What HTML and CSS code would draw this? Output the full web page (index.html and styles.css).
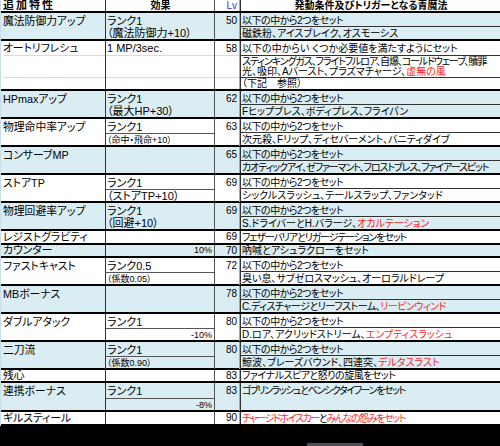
FILE: index.html
```html
<!DOCTYPE html>
<html lang="ja">
<head>
<meta charset="utf-8">
<title>追加特性</title>
<link rel="stylesheet" href="styles.css">
</head>
<body>
<div class="sheet">
  <div class="row head">
    <div class="c c1"><div class="s ht">追加特性</div></div>
    <div class="c c2"><div class="s hc">効果</div></div>
    <div class="c c3"><div class="s lv">Lv</div></div>
    <div class="c c4"><div class="s hc">発動条件及びトリガーとなる青魔法</div></div>
  </div>

  <div class="row pair blue">
    <div class="c c1"><div class="s top">魔法防御力アップ</div></div>
    <div class="c c2"><div class="s top">ランク1</div><div class="s fill">（魔法防御力+10）</div></div>
    <div class="c c3"><div class="s top">50</div></div>
    <div class="c c4"><div class="s top ln t1">以下の中から2つをセット</div><div class="s fill">磁鉄粉、アイスブレイク、オスモーシス</div></div>
  </div>

  <div class="row tall">
    <div class="c c1"><div class="s a grid">オートリフレシュ</div><div class="s b grid"></div><div class="s fill"></div></div>
    <div class="c c2"><div class="s a grid">1 MP/3sec.</div><div class="s b grid"></div><div class="s fill"></div></div>
    <div class="c c3"><div class="s a grid">58</div><div class="s b grid"></div><div class="s fill"></div></div>
    <div class="c c4">
      <div class="s a ln">以下の中からい くつか必要値を満たすようにセット</div>
      <div class="s b ln two"><span class="t2">スティンキングガス、フライトフルロア、自爆、コールドウェーブ、贖罪</span><br>光、吸印、Aバースト、プラズマチャージ、<span class="red">虚無の風</span></div>
      <div class="s fill">（下記　参照）</div>
    </div>
  </div>

  <div class="row pair blue">
    <div class="c c1"><div class="s top">HPmaxアップ</div></div>
    <div class="c c2"><div class="s top">ランク1</div><div class="s fill">（最大HP+30）</div></div>
    <div class="c c3"><div class="s top">62</div></div>
    <div class="c c4"><div class="s top ln t1">以下の中から2つをセット</div><div class="s fill">Fヒップブレス、ボディプレス、フライパン</div></div>
  </div>

  <div class="row pair">
    <div class="c c1"><div class="s top">物理命中率アップ</div></div>
    <div class="c c2"><div class="s top">ランク1</div><div class="s fill box small">（命中・飛命+10）</div></div>
    <div class="c c3"><div class="s top">63</div></div>
    <div class="c c4"><div class="s top ln t1">以下の中から2つをセット</div><div class="s fill">次元殺、Fリップ、ディセバーメント、バニティダイブ</div></div>
  </div>

  <div class="row pair blue">
    <div class="c c1"><div class="s top">コンサーブMP</div></div>
    <div class="c c2"></div>
    <div class="c c3"><div class="s top">65</div></div>
    <div class="c c4"><div class="s top ln t1">以下の中から2つをセット</div><div class="s fill t2">カオティックアイ、ゼファーマント、フロストブレス、ファイアースピット</div></div>
  </div>

  <div class="row pair">
    <div class="c c1"><div class="s top">ストアTP</div></div>
    <div class="c c2"><div class="s top">ランク1</div><div class="s fill box">（ストアTP+10）</div></div>
    <div class="c c3"><div class="s top">69</div></div>
    <div class="c c4"><div class="s top ln t1">以下の中から2つをセット</div><div class="s fill">シックルスラッシュ、テールスラップ、ファンタッド</div></div>
  </div>

  <div class="row pair blue">
    <div class="c c1"><div class="s top">物理回避率アップ</div></div>
    <div class="c c2"><div class="s top">ランク1</div><div class="s fill">（回避+10）</div></div>
    <div class="c c3"><div class="s top">69</div></div>
    <div class="c c4"><div class="s top ln t1">以下の中から2つをセット</div><div class="s fill">S.ドライバーとH.バラージ、<span class="red">オカルテーション</span></div></div>
  </div>

  <div class="row single">
    <div class="c c1"><div class="s fill">レジストグラビティ</div></div>
    <div class="c c2"></div>
    <div class="c c3"><div class="s fill">69</div></div>
    <div class="c c4"><div class="s fill t2">フェザーバリアとリガージテーションをセット</div></div>
  </div>

  <div class="row narrow blue">
    <div class="c c1"><div class="s fill">カウンター</div></div>
    <div class="c c2"><div class="s fill small right">10%</div></div>
    <div class="c c3"><div class="s fill">70</div></div>
    <div class="c c4"><div class="s fill">吶喊とアシュラクローをセット</div></div>
  </div>

  <div class="row pair">
    <div class="c c1"><div class="s top">ファストキャスト</div></div>
    <div class="c c2"><div class="s top">ランク0.5</div><div class="s fill box small">（係数0.05）</div></div>
    <div class="c c3"><div class="s top">72</div></div>
    <div class="c c4"><div class="s top ln t1">以下の中から2つをセット</div><div class="s fill">臭い息、サブゼロスマッシュ、オーロラルドレープ</div></div>
  </div>

  <div class="row pair blue">
    <div class="c c1"><div class="s top">MBボーナス</div></div>
    <div class="c c2"></div>
    <div class="c c3"><div class="s top">78</div></div>
    <div class="c c4"><div class="s top ln t1">以下の中から2つをセット</div><div class="s fill t1">C.ディスチャージとリーフストーム、<span class="red">リーピンウィンド</span></div></div>
  </div>

  <div class="row pair">
    <div class="c c1"><div class="s top">ダブルアタック</div></div>
    <div class="c c2"><div class="s top">ランク1</div><div class="s fill box small right">-10%</div></div>
    <div class="c c3"><div class="s top">80</div></div>
    <div class="c c4"><div class="s top ln t1">以下の中から2つをセット</div><div class="s fill">D.ロア、アクリッドストリーム、<span class="red">エンプティスラッシュ</span></div></div>
  </div>

  <div class="row pair blue">
    <div class="c c1"><div class="s top">二刀流</div></div>
    <div class="c c2"><div class="s top">ランク1</div><div class="s fill box small">（係数0.90）</div></div>
    <div class="c c3"><div class="s top">80</div></div>
    <div class="c c4"><div class="s top ln t1">以下の中から2つをセット</div><div class="s fill">鯨波、ブレーズバウンド、四連突、<span class="red">デルタスラスト</span></div></div>
  </div>

  <div class="row narrow">
    <div class="c c1"><div class="s fill">残心</div></div>
    <div class="c c2"></div>
    <div class="c c3"><div class="s fill">83</div></div>
    <div class="c c4"><div class="s fill t1">ファイナルスピアと怒りの旋風をセット</div></div>
  </div>

  <div class="row wide blue">
    <div class="c c1"><div class="s top">連携ボーナス</div></div>
    <div class="c c2"><div class="s top tallish">ランク1</div><div class="s fill box small right">-8%</div></div>
    <div class="c c3"><div class="s top">83</div></div>
    <div class="c c4"><div class="s top t3">ゴブリンラッシュとベンシクタイフーンをセット</div></div>
  </div>

  <div class="row single">
    <div class="c c1"><div class="s fill">ギルスティール</div></div>
    <div class="c c2"></div>
    <div class="c c3"><div class="s fill">90</div></div>
    <div class="c c4"><div class="s fill t3"><span class="red">チャージドホイスカー</span>と<span class="red">みんなの怨みをセット</span></div></div>
  </div>
</div>
<div class="scrollbar"></div>
</body>
</html>
```

FILE: styles.css
```css
* {
  box-sizing: border-box;
}

html, body {
  margin: 0;
  padding: 0;
}

body {
  width: 500px;
  height: 446px;
  overflow: hidden;
  background: #000;
  color: #000;
  font-family: "Liberation Sans", "Noto Sans CJK JP", sans-serif;
  font-feature-settings: "palt" 1;
}

.sheet {
  width: 500px;
  background: #fff;
  border-left: 1px solid #c9dfe8;
}

.row {
  display: grid;
  grid-template-columns: 105px 109px 25px 260px;
  border-bottom: 2px solid #000;
}

.blue {
  background: #daedf3;
}

.head { height: 13px; }
.pair { height: 28px; }
.tall { height: 50px; }
.single { height: 14px; }
.narrow { height: 13px; }
.wide { height: 29px; }

.c {
  display: flex;
  flex-direction: column;
  min-width: 0;
}

.c1 {
  border-right: 1px solid #333;
  padding-left: 2px;
  font-size: 10.8px;
}

.c2 {
  border-right: 1px solid #555;
  font-size: 11px;
}

.c2 .s {
  padding-left: 1px;
}

.c3 {
  border-right: 1px solid #a8a8a8;
  font-size: 10px;
  text-align: right;
}

.c3 .s {
  padding-right: 2px;
}

.c4 {
  border-left: 1px solid #333;
  font-size: 10px;
}

.c4 .s {
  padding-left: 1px;
}

.s {
  flex: none;
  height: 13px;
  line-height: 13px;
  white-space: nowrap;
}

.s.top {
  height: 14px;
  line-height: 12px;
  padding-top: 2px;
}

.s.fill {
  flex: 1;
  height: auto;
  line-height: 12px;
  padding-top: 0;
}

.c4 .s.fill {
  line-height: 11px;
  padding-top: 1px;
}

.narrow .s.fill,
.tall .c4 .s.fill {
  line-height: 11px;
  padding-top: 0;
}

.ln {
  border-bottom: 1px solid #333;
}

.grid {
  border-bottom: 1px solid #dadada;
}

.s.a {
  height: 15px;
  line-height: 13px;
  padding-top: 1px;
}

.s.b {
  height: 22px;
}

.two {
  line-height: 10px;
  padding-top: 1px;
}

.s.tallish {
  height: 15px;
}

.box {
  border-top: 1px solid #555;
}

.small {
  font-size: 9px;
}

.right {
  text-align: right;
  padding-right: 2px;
}

.red {
  color: #ff1f1f;
}

.t1 {
  letter-spacing: -0.5px;
}

.t2 {
  letter-spacing: -1.1px;
}

.t3 {
  letter-spacing: -1.4px;
}

.head .s {
  height: 11px;
  line-height: 11px;
  font-weight: bold;
}

.ht {
  font-size: 11px;
  letter-spacing: 2px;
}

.hc {
  text-align: center;
  font-size: 10px;
}

.head .lv {
  font-weight: normal;
  color: #3434f0;
  font-size: 10px;
}

.scrollbar {
  width: 56px;
  height: 3px;
  margin: 17px 0 0 307px;
  background: #4c4c56;
}
```
